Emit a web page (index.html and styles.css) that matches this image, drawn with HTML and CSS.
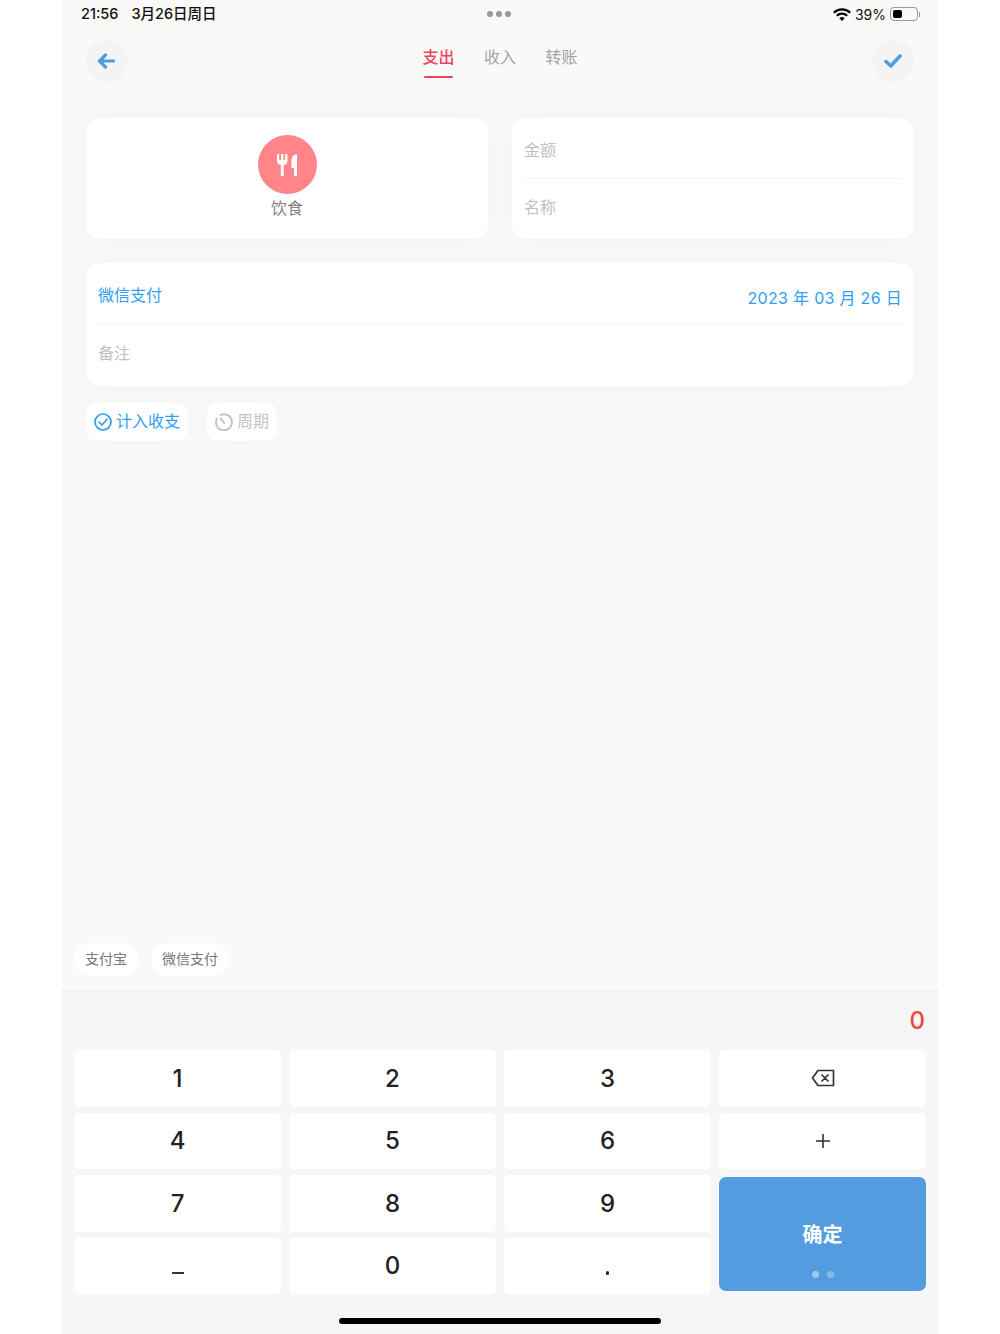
FILE: index.html
```html
<!DOCTYPE html>
<html lang="zh">
<head>
    <meta charset="UTF-8">
    <meta name="viewport" content="width=device-width, initial-scale=1.0">
    <title>记账</title>
    <link rel="stylesheet" href="styles.css">
</head>
<body>
    <div class="app">
        <div class="status-bar">
            <div class="status-left"><span>21:56</span><span>3月26日周日</span></div>
            <div class="status-dots"><i></i><i></i><i></i></div>
            <div class="status-right">
                <svg width="18" height="13" viewBox="0 0 18 13"><path d="M9 13 6.3 10.2a3.9 3.9 0 0 1 5.4 0zM4.6 8.5 3 6.9a8.5 8.5 0 0 1 12 0l-1.6 1.6a6.2 6.2 0 0 0-8.8 0zM1.7 5.600 0 3.900a12.800 12.800 0 0 1 18 0l-1.700 1.700a10.400 10.400 0 0 0-14.600 0z" fill="#000"/></svg>
                <span>39%</span>
                <div class="battery"><div class="battery-level"></div></div>
                <div class="battery-tip"></div>
            </div>
        </div>

        <div class="nav">
            <div class="round-btn">
                <svg class="back-icon" width="18" height="16" viewBox="0 0 18 16"><path d="M16.5 8H3M8.5 2 2.5 8l6 6" fill="none" stroke="#4f9ce0" stroke-width="3.2" stroke-linecap="round" stroke-linejoin="round"/></svg>
            </div>
            <div class="tabs">
                <div class="tab active">支出</div>
                <div class="tab">收入</div>
                <div class="tab">转账</div>
            </div>
            <div class="round-btn">
                <svg width="18" height="14" viewBox="0 0 18 14"><path d="M2 7.5 6.8 12 16 2" fill="none" stroke="#4f9ce0" stroke-width="3.5" stroke-linecap="round" stroke-linejoin="round"/></svg>
            </div>
        </div>

        <div class="form">
            <div class="top-cards">
                <div class="card category">
                    <div class="category-icon">
                        <svg width="20" height="22" viewBox="0 0 20 22"><path d="M0 0h2.2v6h1.800V0h2.400v6h1.800V0h2.200v7q0 3-3.600 4v11h-3V11Q0 10 0 7zM20 0v22h-3v-8h-2.500V6q0-5 5.500-6z" fill="#fff"/></svg>
                    </div>
                    <div class="category-name">饮食</div>
                </div>
                <div class="card fields">
                    <div class="field">金额</div>
                    <div class="field">名称</div>
                </div>
            </div>

            <div class="card details">
                <div class="field account">
                    <span>微信支付</span>
                    <span class="date">2023 年 03 月 26 日</span>
                </div>
                <div class="field">备注</div>
            </div>

            <div class="options">
                <div class="option on">
                    <svg width="18" height="18" viewBox="0 0 18 18"><circle cx="9" cy="9" r="8" fill="none" stroke="#2f9df4" stroke-width="1.7"/><path d="M5 9.200 8 12l5-5.800" fill="none" stroke="#2f9df4" stroke-width="1.700" stroke-linecap="round" stroke-linejoin="round"/></svg>
                    <span>计入收支</span>
                </div>
                <div class="option">
                    <svg width="18" height="18" viewBox="0 0 18 18"><path d="M5.500 2A8 8 0 1 1 1.800 5.600M9.300 10.300 5.800 5.500" fill="none" stroke="#c4c4c4" stroke-width="1.900" stroke-linecap="round"/></svg>
                    <span>周期</span>
                </div>
            </div>
        </div>

        <div class="accounts">
            <div class="chip">支付宝</div>
            <div class="chip">微信支付</div>
        </div>

        <div class="keyboard">
            <div class="amount">0</div>
            <div class="keys">
                <div class="key">1</div>
                <div class="key">2</div>
                <div class="key">3</div>
                <div class="key">
                    <svg width="24" height="18" viewBox="0 0 24 18"><path d="M7 1.500h15.500v15H7L1.500 9zM10.500 5.500l7 7M17.500 5.500l-7 7" fill="none" stroke="#333" stroke-width="1.700" stroke-linejoin="round"/></svg>
                </div>
                <div class="key">4</div>
                <div class="key">5</div>
                <div class="key">6</div>
                <div class="key">
                    <svg width="14" height="14" viewBox="0 0 14 14"><path d="M0 7h14M7 0v14" fill="none" stroke="#333" stroke-width="1.600"/></svg>
                </div>
                <div class="key">7</div>
                <div class="key">8</div>
                <div class="key">9</div>
                <div class="key confirm">
                    <span>确定</span>
                    <div class="pager"><i></i><i></i></div>
                </div>
                <div class="key"><span class="minus"></span></div>
                <div class="key">0</div>
                <div class="key"><span class="point"></span></div>
            </div>
            <div class="home-bar"></div>
        </div>
    </div>
</body>
</html>
```

FILE: styles.css
```css
* {
    box-sizing: border-box;
}
body {
    margin: 0;
    background-color: #fff;
    font-family: Inter, "Noto Sans CJK SC", sans-serif;
}
.app {
    width: 876px;
    height: 1334px;
    margin: 0 auto;
    display: flex;
    flex-direction: column;
    background-color: #f9f9f7;
}

/* 状态栏 */
.status-bar {
    height: 28px;
    padding: 0 18px 0 19px;
    display: flex;
    align-items: center;
    justify-content: space-between;
    position: relative;
    font-size: 14px;
    color: #111;
}
.status-left {
    display: flex;
    align-items: baseline;
    gap: 13px;
    margin-top: -3px;
    font-size: 14.5px;
    font-weight: 500;
}
.status-dots {
    position: absolute;
    left: 425px;
    top: 11px;
    display: flex;
    gap: 3px;
}
.status-dots i {
    width: 6px;
    height: 6px;
    border-radius: 50%;
    background-color: #999;
}
.status-right {
    display: flex;
    align-items: center;
    gap: 4px;
}
.battery {
    width: 28px;
    height: 14px;
    padding: 2px;
    border: 1px solid #999;
    border-radius: 4px;
}
.battery-level {
    width: 9px;
    height: 100%;
    border-radius: 2px;
    background-color: #000;
}
.battery-tip {
    width: 1px;
    height: 5px;
    margin-left: -3px;
    background-color: #999;
}

/* 顶部导航 */
.nav {
    height: 62px;
    padding: 12px 24px 0;
    display: flex;
    justify-content: space-between;
    align-items: flex-start;
}
.round-btn {
    width: 42px;
    height: 42px;
    border-radius: 50%;
    background-color: #f4f4f4;
    display: flex;
    align-items: center;
    justify-content: center;
}
.back-icon {
    margin-left: -2px;
}
.tabs {
    display: flex;
    gap: 29.5px;
}
.tab {
    height: 38px;
    font-size: 16px;
    line-height: 34px;
    color: #a3a3a3;
    position: relative;
}
.tab.active {
    color: #f0435f;
    font-weight: 500;
}
.tab.active::after {
    content: "";
    position: absolute;
    left: 2px;
    right: 1px;
    bottom: 0;
    height: 2px;
    border-radius: 1px;
    background-color: #f0435f;
}

/* 表单 */
.form {
    flex: 1;
    padding: 28px 24px 0;
}
.top-cards {
    display: grid;
    grid-template-columns: 1fr 1fr;
    gap: 24px;
    margin-bottom: 24px;
}
.card {
    background-color: #fff;
    border-radius: 14px;
    box-shadow: 0 0 30px rgba(0,0,0,0.03);
}
.category {
    height: 121px;
    padding-top: 17px;
    display: flex;
    flex-direction: column;
    align-items: center;
}
.category-icon {
    width: 59px;
    height: 59px;
    border-radius: 50%;
    background-color: #ff8589;
    display: flex;
    align-items: center;
    justify-content: center;
}
.category-name {
    margin-top: 2px;
    font-size: 16px;
    line-height: 24px;
    color: #808080;
}
.fields {
    height: 121px;
    padding: 0 11px 0 12px;
}
.field {
    height: 58px;
    font-size: 16px;
    line-height: 56px;
    color: #c0c0c0;
}
.fields .field:first-child {
    height: 61px;
    line-height: 64px;
    border-bottom: 1px solid #f3f3f3;
}
.details {
    height: 123px;
    padding: 0 12px;
}
.account {
    height: 62px;
    line-height: 64px;
    display: flex;
    justify-content: space-between;
    border-bottom: 1px solid #f3f3f3;
    color: #2f9df4;
}
.date {
    padding-top: 3px;
    letter-spacing: 0.3px;
}
.options {
    margin-top: 17px;
    display: flex;
    gap: 19px;
}
.option {
    height: 38px;
    padding: 0 8px;
    border-radius: 10px;
    background-color: #fff;
    display: flex;
    align-items: center;
    gap: 4px;
    font-size: 16px;
    color: #c4c4c4;
    box-shadow: 0 0 20px rgba(0,0,0,0.02);
}
.option span {
    margin-bottom: 4px;
}
.option.on {
    color: #2f9df4;
}

/* 常用账户 */
.accounts {
    height: 47px;
    padding-left: 12px;
    display: flex;
    gap: 13px;
}
.chip {
    height: 33px;
    padding: 0 11px;
    border-radius: 17px;
    background-color: #fff;
    font-size: 14px;
    line-height: 32px;
    color: #777;
}

/* 数字键盘 */
.keyboard {
    height: 344px;
    padding: 0 12px;
    border-top: 1px solid #ececec;
    background-color: #f6f6f6;
}
.amount {
    height: 59px;
    padding: 17px 1px 0 0;
    text-align: right;
    font-size: 24px;
    line-height: 26px;
    font-weight: 500;
    color: #e8483f;
}
.keys {
    display: grid;
    grid-template-columns: repeat(4, 207px);
    grid-auto-rows: 56.5px;
    gap: 6px 8px;
}
.key {
    border-radius: 5px;
    background-color: #fff;
    display: flex;
    align-items: center;
    justify-content: center;
    font-size: 24px;
    font-weight: 500;
    color: #222;
}
.minus {
    width: 12px;
    height: 2px;
    margin-top: 14px;
    background-color: #333;
}
.point {
    width: 3.5px;
    height: 3.5px;
    margin-top: 14px;
    border-radius: 50%;
    background-color: #222;
}
.confirm {
    grid-column: 4;
    grid-row: 3 / span 2;
    margin: 2px 0 3px;
    border-radius: 7px;
    background-color: #539ce0;
    font-size: 20px;
    font-weight: 700;
    color: #fff;
    position: relative;
}
.confirm span {
    margin-bottom: 2px;
}
.pager {
    position: absolute;
    left: 93px;
    bottom: 13px;
    display: flex;
    gap: 8px;
}
.pager i {
    width: 7px;
    height: 7px;
    border-radius: 50%;
    background-color: rgba(255,255,255,0.3);
}
.pager i:first-child {
    background-color: rgba(255,255,255,0.45);
}
.home-bar {
    width: 322px;
    height: 6px;
    margin: 24px auto 0;
    border-radius: 3px;
    background-color: #000;
}
```
